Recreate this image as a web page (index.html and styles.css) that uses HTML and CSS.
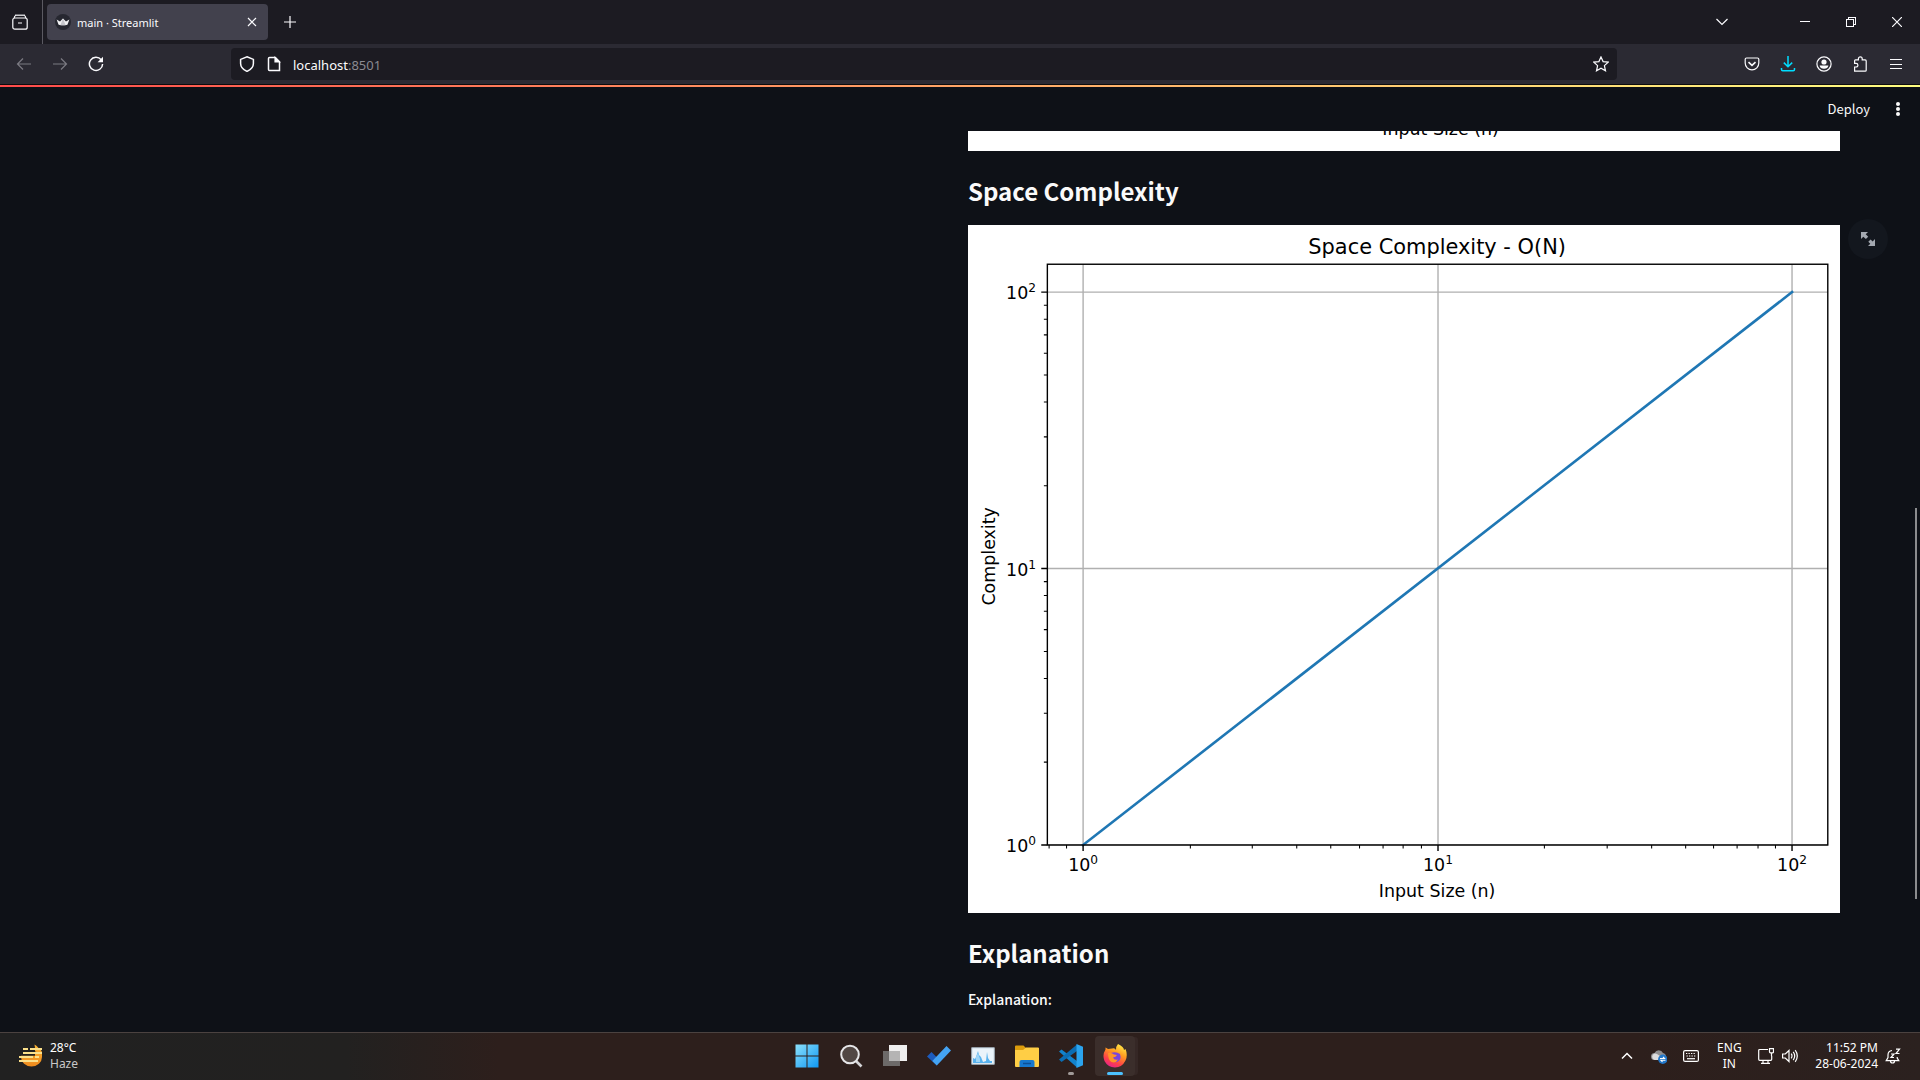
FILE: index.html
```html
<!DOCTYPE html>
<html lang="en">
<head>
<meta charset="utf-8">
<title>main · Streamlit</title>
<link rel="stylesheet" href="styles.css">
</head>
<body>
<header class="browser">
  <div class="tabbar">
    <button class="icon-btn view-btn" aria-label="Recent browsing"><svg class="ico" viewBox="0 0 16 16"><path d="M3 1.2h10"/><rect x=".8" y="4" width="14.4" height="11.2" rx="2"/><path d="M2.2 4.2Q2.2 2.6 3.6 1.4M13.8 4.2Q13.8 2.6 12.4 1.4M6 9h4"/></svg></button>
    <div class="tab">
      <svg class="favicon" viewBox="0 0 16 16"><circle cx="8" cy="8" r="8" fill="#262730"/><path d="M1.6 5.6 5 7.6 8 4.6l3 3 3.4-2-2 5.2q-4.4 1-8.8 0z" fill="#f2f2f4"/><path d="M8 4.6 5.4 11q2.6.5 5.2 0z" fill="#c6c6cc"/></svg>
      <span class="tab-title">main · Streamlit</span>
      <button class="tab-close" aria-label="Close tab"><svg class="ico" viewBox="0 0 10 10"><path d="m1 1 8 8M9 1 1 9"/></svg></button>
    </div>
    <button class="icon-btn new-tab" aria-label="New tab"><svg class="ico s12" viewBox="0 0 12 12"><path d="M6 0v12M0 6h12"/></svg></button>
    <div class="window-buttons">
      <button class="icon-btn list-tabs" aria-label="List all tabs"><svg class="ico s12" viewBox="0 0 12 12"><path d="m.5 3 5.500 5.500L11.500 3"/></svg></button>
      <button class="icon-btn" aria-label="Minimize"><svg class="ico s10 crisp" viewBox="0 0 10 10"><path d="M0 4.500h10"/></svg></button>
      <button class="icon-btn" aria-label="Restore"><svg class="ico s10 crisp" viewBox="0 0 10 10"><path d="M.5 2.500h7v7h-7zM2.500 2.500v-2h7v7h-2"/></svg></button>
      <button class="icon-btn" aria-label="Close"><svg class="ico s10" viewBox="0 0 10 10"><path d="m0 0 10 10M10 0 0 10"/></svg></button>
    </div>
  </div>
  <div class="toolbar">
    <div class="nav-buttons">
      <button class="icon-btn" aria-label="Back" disabled><svg class="ico s16" viewBox="0 0 16 16"><path d="M15 8H1.500M7 2.500 1.500 8 7 13.500"/></svg></button>
      <button class="icon-btn" aria-label="Forward" disabled><svg class="ico s16" viewBox="0 0 16 16"><path d="M1 8h13.500M9 2.500 14.500 8 9 13.500"/></svg></button>
      <button class="icon-btn" aria-label="Reload"><svg class="ico s16" viewBox="0 0 16 16"><path d="M13.200 3.800A6.600 6.600 0 1 0 14.600 8" stroke-width="1.500"/><path d="M15 .8v5.400H9.600z" fill="currentColor" stroke="none"/></svg></button>
    </div>
    <div class="urlbar">
      <svg class="ico s16" viewBox="0 0 16 16"><path d="M8 .8 14.400 3.400v4q0 5-6.400 8-6.400-3-6.400-8v-4z" stroke-width="1.500"/></svg>
      <svg class="ico s16" viewBox="0 0 16 16"><path d="M3.500 1.500h5.800L13.500 5.700v8.800h-10q-1 0-1-1v-11q0-1 1-1z" stroke-width="1.500"/><path d="M9 1.500v4.500h4.500z" fill="currentColor"/></svg>
      <span class="url">localhost<span class="port">:8501</span></span>
      <svg class="ico s16" viewBox="0 0 16 16"><path d="m8 .9 2.100 4.700 5.100.5-3.800 3.500 1.100 5.200L8 12.200l-4.500 2.600 1.100-5.200L.8 6.100l5.100-.5z"/></svg>
    </div>
    <div class="tool-buttons">
      <button class="icon-btn" aria-label="Pocket"><svg class="ico s16" viewBox="0 0 16 16"><path d="M2.500 2h11q1.300 0 1.300 1.300V7a6.800 6.800 0 0 1-13.600 0V3.300Q1.200 2 2.500 2z"/><path d="m4.500 6.200 3.500 3.200 3.500-3.200" stroke-width="1.600"/></svg></button>
      <button class="icon-btn download" aria-label="Downloads"><svg class="ico s16" viewBox="0 0 16 16"><path d="M8 0v10.500M3.800 6.600 8 10.700l4.200-4.100M1.500 12v1.600q0 1.200 1.200 1.200h10.600q1.200 0 1.200-1.200V12" stroke-width="1.500"/></svg></button>
      <button class="icon-btn" aria-label="Account"><svg class="ico s16" viewBox="0 0 16 16"><circle cx="8" cy="8" r="7.100"/><circle cx="8" cy="6" r="2.600" fill="currentColor" stroke="none"/><path d="M3.600 9.600h8.800q-.6 3.200-4.400 3.200t-4.400-3.200z" fill="currentColor" stroke="none"/></svg></button>
      <button class="icon-btn" aria-label="Extensions"><svg class="ico s16" viewBox="0 0 16 16"><path d="M2.200 15.200V11h1.500a1.800 1.800 0 0 0 0-3.600H2.200V4.800q0-.9.9-.9H6V2.700a1.900 1.900 0 0 1 3.800 0v1.200h3q1 0 1 1v9.300q0 1-1 1z" transform="translate(.4)"/></svg></button>
      <button class="icon-btn" aria-label="Menu"><svg class="ico s12 crisp" viewBox="0 0 12 12"><path d="M0 1.500h12M0 6h12M0 10.500h12"/></svg></button>
    </div>
  </div>
</header>

<main class="app">
  <header class="app-header">
    <button class="deploy">Deploy</button>
    <button class="icon-btn kebab" aria-label="Main menu"><svg class="s16" viewBox="0 0 16 16"><circle cx="8" cy="3" r="2" fill="#fafafa"/><circle cx="8" cy="8" r="2" fill="#fafafa"/><circle cx="8" cy="13" r="2" fill="#fafafa"/></svg></button>
  </header>
  <div class="columns">
    <section class="column" aria-label="Input"></section>
    <section class="column">
      <svg class="chart" viewBox="0 766 1000 23"><text class="label mid" x="542" y="771">Input Size (n)</text></svg>
      <h3>Space Complexity</h3>
      <div class="figure">
        <svg class="chart" viewBox="0 0 1000 789">
          <path class="grid" d="M132 45V711M539 45V711M945 45V711M91 77H986M91 394H986M91 711H986"/>
          <path class="data" d="M132 711 945 77"/>
          <rect class="frame" x="91" y="45" width="895" height="666"/>
          <path class="major" d="M132 711v7M539 711v7M945 711v7M91 77h-7M91 394h-7M91 711h-7"/>
          <path class="minor" d="M93 711v4M113 711v4M255 711v4M326 711v4M377 711v4M416 711v4M449 711v4M476 711v4M499 711v4M520 711v4M661 711v4M733 711v4M784 711v4M823 711v4M855 711v4M882 711v4M906 711v4M926 711v4"/>
          <path class="minor" d="M91 616h-4M91 560h-4M91 520h-4M91 489h-4M91 464h-4M91 443h-4M91 425h-4M91 409h-4M91 299h-4M91 243h-4M91 203h-4M91 172h-4M91 147h-4M91 126h-4M91 108h-4M91 92h-4"/>
          <text class="title mid" x="538" y="33">Space Complexity - O(N)</text>
          <text class="label end" x="78" y="85">10<tspan class="sup" dy="-8">2</tspan></text>
          <text class="label end" x="78" y="402">10<tspan class="sup" dy="-8">1</tspan></text>
          <text class="label end" x="78" y="719">10<tspan class="sup" dy="-8">0</tspan></text>
          <text class="label mid" x="132" y="741">10<tspan class="sup" dy="-8">0</tspan></text>
          <text class="label mid" x="539" y="741">10<tspan class="sup" dy="-8">1</tspan></text>
          <text class="label mid" x="945" y="741">10<tspan class="sup" dy="-8">2</tspan></text>
          <text class="label mid" x="538" y="771">Input Size (n)</text>
          <text class="label mid" transform="translate(31 380) rotate(-90)">Complexity</text>
        </svg>
        <button class="fullscreen" aria-label="View fullscreen"><svg class="s16" viewBox="0 0 16 16"><path d="M1 1h7L5.700 3.300l2.500 2.500-2.300 2.300-2.600-2.400L1 8zM15 15H8l2.300-2.300-2-2 2.300-2.300 2 2L15 8z" fill="#a3a8b0"/></svg></button>
      </div>
      <h3>Explanation</h3>
      <p>Explanation:</p>
    </section>
  </div>
  <div class="scroll-thumb"></div>
</main>

<footer class="taskbar">
  <button class="weather">
    <svg class="s24" viewBox="0 0 24 24"><defs><linearGradient id="sun" x1="0" y1="0" x2="0" y2="1"><stop offset="0" stop-color="#f9b233"/><stop offset="1" stop-color="#ee8a1d"/></linearGradient></defs><path d="M15.500.5q2.500 1 4 3.500h3v2h-.6l1.100 2v5a10.500 9.500 0 0 1-21 0v-1.200h14V10l5-1-5-1.500V4z" fill="url(#sun)"/><path d="M4 5h5M11 5h12M4 9h19M0 13h14M16 13h4M0 17h19" stroke="#fbe08a" stroke-width="2"/></svg>
    <span class="lines"><span>28°C</span><span class="dim">Haze</span></span>
  </button>
  <nav class="apps">
    <button class="app-btn" aria-label="Start"><svg class="s24" viewBox="0 0 24 24"><defs><linearGradient id="win" x1="0" y1="0" x2="1" y2="1"><stop offset="0" stop-color="#8be0fb"/><stop offset="1" stop-color="#0f98f5"/></linearGradient></defs><path d="M.5.5h11v11H.5zM12.500.5h11v11h-11zM.5 12.500h11v11H.5zM12.500 12.500h11v11h-11z" fill="url(#win)"/></svg></button>
    <button class="app-btn" aria-label="Search"><svg class="s24" viewBox="0 0 24 24"><path d="m17 17 5.500 5.500" stroke="#d4d4d6" stroke-width="2.600"/><circle cx="11" cy="10.500" r="8.800" fill="#514744" stroke="#e6e6e8" stroke-width="2"/></svg></button>
    <button class="app-btn" aria-label="Task view"><svg class="s24" viewBox="0 0 24 24"><path d="M0 7h17v15H0z" fill="#6d6a69"/><path d="M6 1h18v16H6z" fill="#f0efef"/><path d="M6 7h11v10H6z" fill="#b5b4b4"/></svg></button>
    <button class="app-btn" aria-label="To Do"><svg class="s24" viewBox="0 0 24 24"><path d="M0 12.500 4.500 8l7.300 7.300-2 6.200z" fill="#1c5bbd"/><path d="M5.300 17 19.500 2 24 6.500 9.800 21.500z" fill="#44a3f2"/></svg></button>
    <button class="app-btn" aria-label="Performance Monitor"><svg class="s24" viewBox="0 0 24 24"><path d="M.7 3.700h22.600v16.600H.7z" fill="#eaf3fa" stroke="#9fadb8"/><path d="M2 19v-5l2 1 1-2 2-6 1 4 2 2 2 5 3-1 1-9 1 6 2 3h2v2z" fill="#58b2ee"/><path d="M5 18V13l2-4 2 6v3z" fill="#9fd5f7"/></svg></button>
    <button class="app-btn" aria-label="File Explorer"><svg class="s24" viewBox="0 0 24 24"><path d="M0 2.500q0-1 1-1h7.500L11 4h12q1 0 1 1v4H0z" fill="#dd9c0c"/><path d="M0 6h8l3-2.500h12q1 0 1 1V22q0 1-1 1H1q-1 0-1-1z" fill="#ffce45"/><path d="M4.500 23v-5q0-2 2-2h11q2 0 2 2v5z" fill="#1678cf"/><path d="M8 19.500h8" stroke="#0c4f96" stroke-width="1.500"/></svg></button>
    <button class="app-btn running" aria-label="Visual Studio Code"><svg class="s24" viewBox="0 0 24 24"><path d="M0 7.500 2.500 5.500 18 17v6.500z" fill="#1283cd"/><path d="M0 15.500 18 .5v6.500L2.500 18z" fill="#0b6db3"/><path d="M17.500 0 24 2.800v18.400L17.500 24z" fill="#2ba4ee"/></svg></button>
    <button class="app-btn active" aria-label="Firefox"><svg class="s24" viewBox="0 0 24 24"><defs><linearGradient id="fox" x1=".8" y1="0" x2=".3" y2="1"><stop offset="0" stop-color="#fff04a"/><stop offset=".4" stop-color="#ff9a1f"/><stop offset=".75" stop-color="#ff3f4a"/><stop offset="1" stop-color="#e5238c"/></linearGradient></defs><path d="M15 0q6 3 6 6l1.500-1Q25 11 22.500 16.500 19 23.500 12 23.500T1.500 17Q-1 11 2.500 5.500V3.500Q4 4 5 5L9 4.500Q12 3.500 13 6 13 2 15 0z" fill="url(#fox)"/><path d="M8 9q5-2 9 1 2 6-3 8-6 1-7-4z" fill="#7a45dc"/><path d="M5 9q3-1 6 1.500l3 .5q-1 2-4 2.500 1 3 5 2-2 4-6.500 2.500Q5 16 5 9z" fill="#ff9428"/></svg></button>
  </nav>
  <div class="tray">
    <button class="icon-btn" aria-label="Hidden icons"><svg class="ico s12" viewBox="0 0 12 12"><path d="m1 8.500 5-5 5 5" stroke-width="1.500"/></svg></button>
    <button class="icon-btn" aria-label="OneDrive"><svg class="s16" viewBox="0 0 16 16"><path d="M3.500 12a3.500 3.500 0 0 1 0-7A4.700 4.700 0 0 1 12 5q3 .5 3 4v3z" fill="#8f8f91"/><path d="M3.500 12a3.400 3.400 0 0 1 0-6.500Q6 5 10 9v3z" fill="#dcdcde"/><circle cx="11.800" cy="11.300" r="4.700" fill="#2277c9"/><path d="M9 10.500h4.500L12 9M14.500 12.300H10l1.500 1.500" fill="none" stroke="#fff" stroke-width="1.100"/></svg></button>
    <button class="icon-btn" aria-label="Touch keyboard"><svg class="ico s16" viewBox="0 0 16 16"><rect x=".6" y="2.600" width="14.800" height="10.800" rx="1.500"/><path d="M3 5.500h10M3.500 8h9" stroke-dasharray="1.300 1.200"/><path d="M4 10.700h8"/></svg></button>
    <button class="lines lang"><span>ENG</span><span>IN</span></button>
    <button class="quick" aria-label="Network and volume">
      <svg class="ico s16" viewBox="0 0 16 16"><path d="M10 1.500H1.700q-1 0-1 1v8.800q0 1 1 1h11q1 0 1-1V8M5 12.500v2.700M10 12.500v2.700M3 15.300h9M11.500.6h4v3.200q0 1-1 1h-2q-1 0-1-1zM13.500 5v3"/></svg>
      <svg class="ico s16" viewBox="0 0 16 16"><path d="M.6 6h2.700L7 2.500v11L3.300 10H.6zM9.200 5.700q1.600 2.300 0 4.600M11.200 3.900q3 4.100 0 8.200M13.200 2.200q4.200 5.800 0 11.600"/></svg>
    </button>
    <button class="lines clock"><span>11:52 PM</span><span>28-06-2024</span></button>
    <button class="icon-btn bell" aria-label="Notifications"><svg class="ico s16" viewBox="0 0 16 16"><path d="M7 2.500Q3 3 3 7v2.500L1.200 12.700h12.600L12.200 10V9M5.500 13q0 2 2 2t2-2"/><path d="M6 6h3l-3 3.500h3M11 1.200h3.500L11 5.500h3.500"/></svg></button>
  </div>
</footer>
</body>
</html>
```
FILE: styles.css
```css
* { box-sizing: border-box; }
body {
  margin: 0;
  height: 100vh;
  display: flex;
  flex-direction: column;
  overflow: hidden;
  background: #0e1117;
  color: #fafafa;
  font: 12px/16px "Noto Sans", sans-serif;
}
button {
  border: 0;
  padding: 0;
  margin: 0;
  background: none;
  color: inherit;
  font: inherit;
}
svg { display: block; flex: none; }
.ico { fill: none; stroke: currentColor; stroke-width: 1.2; }
.crisp { shape-rendering: crispEdges; stroke-width: 1; }
.s10 { width: 10px; height: 10px; }
.s12 { width: 12px; height: 12px; }
.s16 { width: 16px; height: 16px; }
.s24 { width: 24px; height: 24px; }
.icon-btn { display: grid; place-items: center; }

/* Browser chrome */
.browser { flex: none; background: #2b2a33; border-bottom: 1px solid #0c0c0d; color: #fbfbfe; }
.tabbar { display: flex; align-items: center; height: 44px; background: #1c1b22; }
.view-btn { width: 43px; height: 44px; padding-right: 3px; border-right: 1px solid #5b5a62; }
.view-btn svg { width: 16px; height: 16px; }
.tab {
  display: flex;
  align-items: center;
  gap: 6px;
  width: 221px;
  height: 36px;
  margin-left: 4px;
  padding: 0 11px 0 8px;
  border-radius: 4px;
  background: #42414d;
}
.favicon { width: 16px; height: 16px; }
.tab-title { flex: 1; padding-top: 1px; font-size: 11px; }
.tab-close svg { width: 10px; height: 10px; }
.new-tab { width: 44px; }
.window-buttons { display: flex; margin-left: auto; }
.window-buttons .icon-btn { width: 46px; height: 44px; }
.window-buttons .list-tabs { margin-right: 37px; }
.toolbar { display: flex; align-items: center; height: 40px; }
.nav-buttons { display: flex; width: 231px; padding-left: 6px; }
.nav-buttons .icon-btn { width: 36px; height: 32px; }
.nav-buttons .icon-btn:disabled { color: #7b7a82; }
.urlbar {
  flex: 1;
  display: flex;
  align-items: center;
  gap: 11px;
  height: 32px;
  padding: 0 8px;
  border-radius: 4px;
  background: #1c1b22;
}
.url { flex: 1; padding-top: 1px; font-size: 13px; }
.port { color: #8b8a91; }
.tool-buttons { display: flex; justify-content: flex-end; width: 303px; padding-right: 6px; }
.tool-buttons .icon-btn { width: 36px; height: 32px; }
.download { color: #00ddff; }

/* Streamlit page */
.app {
  flex: 1;
  min-height: 0;
  position: relative;
  overflow: hidden;
  font-family: "Noto Sans CJK SC", sans-serif;
}
.app-header {
  display: flex;
  justify-content: flex-end;
  align-items: center;
  gap: 20px;
  height: 46px;
  padding: 2px 14px 0 0;
  background: linear-gradient(90deg, #ff4b4b, #fffd80) top / 100% 2px no-repeat;
}
.deploy { font-size: 13px; }
.columns { display: grid; grid-template-columns: 1fr 1fr; gap: 16px; padding: 0 80px; }
.column { min-width: 0; }
.figure { position: relative; }
.chart { width: 100%; height: auto; background: #fff; font-family: "DejaVu Sans", sans-serif; }
h3 { margin: 0; padding: 22px 0 16px; font-size: 24px; line-height: 36px; font-weight: 700; }
p { margin: 0; font-size: 14px; line-height: 24px; font-weight: 500; }
.fullscreen {
  position: absolute;
  top: -6px;
  right: -48px;
  width: 40px;
  height: 40px;
  display: grid;
  place-items: center;
  border-radius: 50%;
  background: #13171e;
}
.scroll-thumb { position: absolute; top: 423px; bottom: 133px; right: 3px; width: 2px; background: #8b8c8e; }
.grid, .frame, .major, .minor, .data { fill: none; stroke: #000; }
.grid { stroke: #b0b0b0; stroke-width: 1.6; }
.data { stroke: #1f77b4; stroke-width: 3; stroke-linecap: square; }
.frame, .major { stroke-width: 1.6; }
.minor { stroke-width: 1.2; }
.label { font-size: 20px; }
.title { font-size: 24px; }
.sup { font-size: 14px; }
.mid { text-anchor: middle; }
.end { text-anchor: end; }

/* Taskbar */
.taskbar {
  flex: none;
  display: grid;
  grid-template-columns: 1fr auto 1fr;
  align-items: center;
  height: 48px;
  padding-bottom: 1px;
  border-top: 1px solid #4b4240;
  background: linear-gradient(90deg, #212121 0, #222120 18%, #2d1f1c 26%, #2d1f1c 85%, #2b211f 100%);
  color: #fff;
}
.lines { display: flex; flex-direction: column; padding-bottom: 1px; font-size: 12px; line-height: 16px; }
.dim { color: #c8c8c8; }
.weather { display: flex; align-items: center; gap: 7px; padding-left: 19px; text-align: left; }
.apps { display: flex; gap: 4px; padding-left: 2px; }
.app-btn { position: relative; display: grid; place-items: center; width: 40px; height: 40px; border-radius: 4px; }
.active { background: #3b2e2b; box-shadow: 4px 0 0 -1px #352725; }
.running::after, .active::after {
  content: "";
  position: absolute;
  bottom: 1px;
  left: 17px;
  width: 6px;
  height: 3px;
  border-radius: 2px;
  background: #a09a98;
}
.active::after { left: 12px; width: 16px; background: #4cc2ff; }
.tray { display: flex; align-items: center; justify-content: flex-end; padding-right: 12px; }
.tray .icon-btn { width: 32px; height: 40px; }
.lang { width: 44px; align-items: center; }
.quick { display: flex; gap: 8px; padding: 0 17px 0 7px; }
.clock { align-items: flex-end; }
.tray .bell { width: 30px; }
```
